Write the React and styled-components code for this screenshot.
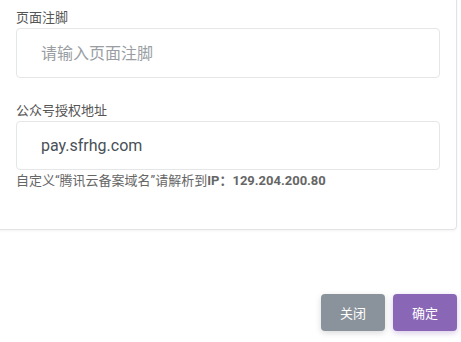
import React from "react";
import styled, { createGlobalStyle } from "styled-components";

const Global = createGlobalStyle`
  html, body { margin: 0; padding: 0; background: #fff; }
  body { font-family: Roboto, "Noto Sans CJK SC", sans-serif; overflow: hidden; }
  * { box-sizing: border-box; }
`;

const Page = styled.div`
  width: 461px;
  height: 342px;
  overflow: hidden;
  display: flex;
  flex-direction: column;
`;

const Card = styled.div`
  margin: -4px 0 0 -4px;
  width: 461px;
  padding: 11px 16px 38px 19px;
  background: #fff;
  border: 1px solid #e3e3e3;
  border-radius: 4px;
  box-shadow: 0 1px 3px rgba(0, 0, 0, 0.05);
`;

const Field = styled.div`
  display: flex;
  flex-direction: column;
  margin-bottom: ${(p) => p.$mb || 0}px;
`;

const Label = styled.label`
  font-size: 13px;
  line-height: 20px;
  color: #555;
`;

const Input = styled.input`
  height: ${(p) => p.$h || 49}px;
  width: 100%;
  border: 1px solid #e4e6e8;
  border-radius: 4px;
  padding: 0 24px;
  font-family: Roboto, "Noto Sans CJK SC", sans-serif;
  font-size: 16px;
  color: #495057;
  background: #fff;
  outline: none;
  &::placeholder { color: #9a9ea3; }
`;

const Help = styled.div`
  font-size: 13px;
  line-height: 20px;
  color: #666;
  margin-top: 1px;
  b { font-weight: 700; }
`;

const Footer = styled.div`
  display: flex;
  justify-content: flex-end;
  gap: 8px;
  padding: 64px 4px 0 0;
`;

const Button = styled.button`
  width: 64px;
  height: 37px;
  border: none;
  border-radius: 4px;
  color: #fff;
  font-family: Roboto, "Noto Sans CJK SC", sans-serif;
  font-size: 13px;
  background: ${(p) => p.$bg};
  box-shadow: 0 2px 6px ${(p) => p.$shadow};
  cursor: pointer;
`;

export default function App() {
  return (
    <>
      <Global />
      <Page>
        <Card>
          <Field $mb={23}>
            <Label>页面注脚</Label>
            <Input $h={50} placeholder="请输入页面注脚" />
          </Field>
          <Field>
            <Label>公众号授权地址</Label>
            <Input defaultValue="pay.sfrhg.com" />
            <Help>
              自定义“腾讯云备案域名”请解析到<b>IP：129.204.200.80</b>
            </Help>
          </Field>
        </Card>
        <Footer>
          <Button $bg="#8a939b" $shadow="rgba(0,0,0,0.15)">关闭</Button>
          <Button $bg="#8a67b6" $shadow="rgba(138,103,182,0.35)">确定</Button>
        </Footer>
      </Page>
    </>
  );
}
